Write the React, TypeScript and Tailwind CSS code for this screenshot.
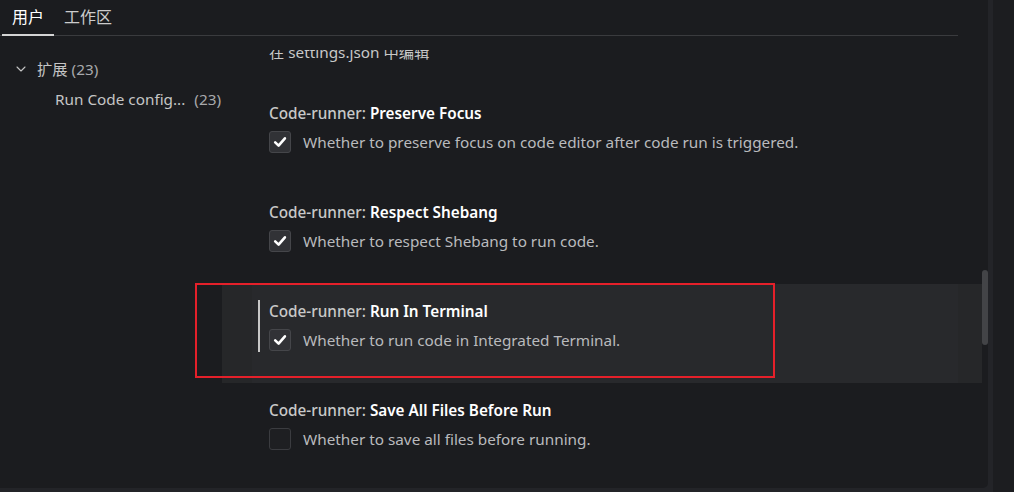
import React from "react";
import { ChevronDown } from "lucide-react";

const FONT = { fontFamily: '"Noto Sans", "Noto Sans CJK SC", sans-serif' };

function Check({ checked }: { checked: boolean }) {
  if (!checked) {
    return <div className="w-[22px] h-[22px] rounded-[3px] border border-[#3b3c40] bg-[#1e1f22] shrink-0" />;
  }
  return (
    <div className="w-[22px] h-[22px] rounded-[3px] border border-[#45464a] bg-[#313236] shrink-0 flex items-center justify-center">
      <svg width="16" height="16" viewBox="0 0 16 16" fill="none">
        <path d="M3.2 8.4 L6.6 11.6 L12.9 4.3" stroke="#ffffff" strokeWidth="2.6" strokeLinecap="round" strokeLinejoin="round" />
      </svg>
    </div>
  );
}

function Setting({
  label,
  desc,
  checked,
  focused,
}: {
  label: string;
  desc: string;
  checked: boolean;
  focused?: boolean;
}) {
  return (
    <div className={"h-[99px] shrink-0 " + (focused ? "bg-[#262729]" : "")}>
      <div className={"ml-[30px] mr-[24px] h-full pt-[16px] " + (focused ? "bg-[#28292c]" : "")}>
        <div className={"ml-[6px] border-l-2 pl-[9px] py-[1px] " + (focused ? "border-[#c8c8c8]" : "border-transparent")}>
          <div className="h-[20px] leading-[20px] text-[15.3px] whitespace-nowrap">
            <span className="text-[#c8c8c8] font-medium">Code-runner: </span>
            <span className="text-white font-semibold">{label}</span>
          </div>
          <div className="mt-[8px] flex items-center gap-[12px] h-[22px]">
            <Check checked={checked} />
            <span className="text-[15.3px] text-[#b9babd] whitespace-nowrap">{desc}</span>
          </div>
        </div>
      </div>
    </div>
  );
}

export default function App() {
  return (
    <div className="w-[1014px] h-[492px] bg-[#232428] relative overflow-hidden flex" style={FONT}>
      <div className="w-[988px] h-[488px] bg-[#1b1c1f] rounded-br-[5px] flex flex-col relative overflow-hidden shrink-0">
        <div className="h-[36px] w-[958px] border-b border-[#3a3b3e] flex items-end pl-[2px] shrink-0">
          <div className="h-[36px] px-[10px] flex items-center text-[16px] text-white border-b-2 border-[#d4d4d4] -mb-px">用户</div>
          <div className="h-[36px] px-[10px] flex items-center text-[16px] text-[#cccccc]">工作区</div>
        </div>
        <div className="flex flex-1 min-h-0">
          <div className="w-[222px] shrink-0 pt-[21px] text-[15.3px]">
            <div className="h-[24px] flex items-center pl-[13px] text-[#c5c5c5]">
              <ChevronDown size={16} strokeWidth={1.6} className="text-[#c5c5c5]" />
              <span className="ml-[8px]">扩展</span>
              <span className="ml-[4px] text-[#a8a9ac]">(23)</span>
            </div>
            <div className="h-[24px] mt-[6px] flex items-center pl-[55px] text-[#c5c5c5]">
              <span>Run Code config...</span>
              <span className="ml-[9px] text-[#a8a9ac]">(23)</span>
            </div>
          </div>
          <div className="w-[760px] shrink-0 mt-[14px] overflow-hidden flex flex-col">
            <div className="h-[36px] shrink-0 pl-[47px]">
              <div className="-mt-[8px] leading-[20px] text-[15.3px] text-[#c8c8c8]">在 settings.json 中编辑</div>
            </div>
            <Setting label="Preserve Focus" desc="Whether to preserve focus on code editor after code run is triggered." checked />
            <Setting label="Respect Shebang" desc="Whether to respect Shebang to run code." checked />
            <Setting label="Run In Terminal" desc="Whether to run code in Integrated Terminal." checked focused />
            <Setting label="Save All Files Before Run" desc="Whether to save all files before running." checked={false} />
          </div>
        </div>
        <div className="absolute right-0 top-[270px] w-[6px] h-[75px] rounded-[3px] bg-[#434447]" />
      </div>
      <div className="ml-[5px] flex-1 h-full bg-[#1c1d20]" />
      <div className="absolute left-[195px] top-[283px] w-[580px] h-[95px] border-2 border-[#e5202a]" />
    </div>
  );
}
